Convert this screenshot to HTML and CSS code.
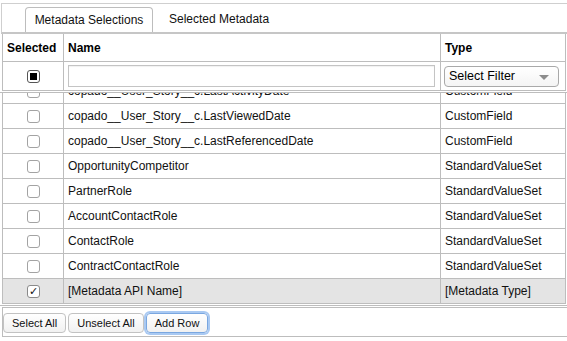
FILE: index.html
```html
<!DOCTYPE html>
<html lang="en">
<head>
    <meta charset="UTF-8">
    <title>Metadata Selections</title>
    <link rel="stylesheet" href="styles.css">
</head>
<body>
    <div class="panel">
        <div class="tabs">
            <div class="tab active">Metadata Selections</div>
            <div class="tab">Selected Metadata</div>
        </div>

        <table class="grid">
            <colgroup>
                <col class="col-sel">
                <col class="col-name">
                <col class="col-type">
            </colgroup>
            <tr class="titles">
                <th>Selected</th>
                <th>Name</th>
                <th>Type</th>
            </tr>
            <tr class="filters">
                <td class="sel"><span class="cb cb-mixed"></span></td>
                <td><input class="name-filter" type="text"></td>
                <td>
                    <div class="select">Select Filter<span class="caret"></span></div>
                </td>
            </tr>
        </table>

        <!-- scrolled list, first row half hidden -->
        <div class="rows-view">
            <table class="grid rows">
                <colgroup>
                    <col class="col-sel">
                    <col class="col-name">
                    <col class="col-type">
                </colgroup>
                <tr><td class="sel"><span class="cb"></span></td><td>copado__User_Story__c.LastActivityDate</td><td>CustomField</td></tr>
                <tr><td class="sel"><span class="cb"></span></td><td>copado__User_Story__c.LastViewedDate</td><td>CustomField</td></tr>
                <tr><td class="sel"><span class="cb"></span></td><td>copado__User_Story__c.LastReferencedDate</td><td>CustomField</td></tr>
                <tr><td class="sel"><span class="cb"></span></td><td>OpportunityCompetitor</td><td>StandardValueSet</td></tr>
                <tr><td class="sel"><span class="cb"></span></td><td>PartnerRole</td><td>StandardValueSet</td></tr>
                <tr><td class="sel"><span class="cb"></span></td><td>AccountContactRole</td><td>StandardValueSet</td></tr>
                <tr><td class="sel"><span class="cb"></span></td><td>ContactRole</td><td>StandardValueSet</td></tr>
                <tr><td class="sel"><span class="cb"></span></td><td>ContractContactRole</td><td>StandardValueSet</td></tr>
                <tr class="new-row"><td class="sel"><span class="cb cb-checked">&#10003;</span></td><td>[Metadata API Name]</td><td>[Metadata Type]</td></tr>
            </table>
        </div>

        <div class="footer">
            <button class="btn">Select All</button>
            <button class="btn">Unselect All</button>
            <button class="btn focused">Add Row</button>
        </div>
    </div>
</body>
</html>
```

FILE: styles.css
```css
body {
    margin: 0;
    background: #fff;
    font-family: 'Liberation Sans', Arial, sans-serif;
    font-size: 12px;
    color: #000;
}

.panel {
    padding-top: 3px;
    width: 567px;
}

/* Tabs */
.tabs {
    display: flex;
    align-items: flex-end;
    height: 28px;
    margin-left: 1px;
    padding-left: 23px;
    border-top: 1px solid #cfcfcf;
    border-left: 1px solid #cfcfcf;
    border-bottom: 2px solid #c6c6c6;
}

.tab {
    height: 25px;
    line-height: 24px;
    padding: 0 16px;
    color: #111;
}

.tab.active {
    box-sizing: border-box;
    width: 128px;
    padding: 0;
    text-align: center;
    border: 1px solid #bdbdbd;
    border-bottom: none;
    border-radius: 4px 4px 0 0;
}

/* Grid */
.grid {
    border-collapse: collapse;
    table-layout: fixed;
    width: 563px;
    margin-left: 2px;
}

.col-sel { width: 61px; }
.col-name { width: 377px; }
.col-type { width: 125px; }

.grid th,
.grid td {
    border: 1px solid #bdbdbd;
    padding: 0 4px;
    text-align: left;
    white-space: nowrap;
    overflow: hidden;
}

.grid tr:first-child th,
.grid tr:first-child td {
    border-top: none;
}

.titles th {
    height: 26px;
    font-weight: bold;
    padding-top: 1px;
}

.filters td {
    height: 28px;
}

.grid .sel {
    text-align: center;
    padding: 0;
}

/* Checkboxes */
.cb {
    display: inline-block;
    box-sizing: border-box;
    width: 13px;
    height: 13px;
    vertical-align: middle;
    border: 1px solid #a3a3a3;
    border-radius: 3px;
    background: #fff;
    font-size: 11px;
    line-height: 11px;
    text-align: center;
    color: #111;
}

.cb-mixed {
    border-color: #555;
    position: relative;
}

.cb-mixed::after {
    content: "";
    position: absolute;
    left: 2px;
    top: 2px;
    width: 7px;
    height: 7px;
    background: #000;
}

.cb-checked {
    border-color: #8a8a8a;
}

/* Filters */
.name-filter {
    box-sizing: border-box;
    width: 367px;
    height: 22px;
    margin: 0;
    display: block;
    border: 1px solid #c4c4c4;
    box-shadow: inset 0 1px 1px rgba(0, 0, 0, 0.06);
}

.select {
    box-sizing: border-box;
    width: 115px;
    height: 21px;
    margin-left: -1px;
    padding-left: 4px;
    line-height: 19px;
    font-size: 12.5px;
    border: 1px solid #a9a9a9;
    border-radius: 4px;
    background: linear-gradient(#fff, #f4f4f4);
    position: relative;
}

.caret {
    position: absolute;
    right: 9px;
    top: 8px;
    border-left: 5px solid transparent;
    border-right: 5px solid transparent;
    border-top: 5px solid #8c8c8c;
}

/* Rows */
.rows-view {
    height: 212px;
    overflow: hidden;
    margin-top: 1px;
    border-top: 1px solid #bdbdbd;
    border-bottom: 1px solid #bdbdbd;
}

.rows {
    margin-top: -15px;
}

.rows td {
    height: 24px;
    color: #111;
}

.rows tr:first-child td {
    border-top: 1px solid #bdbdbd;
}

.new-row td {
    background: #e4e4e4;
}

/* Footer */
.footer {
    display: flex;
    gap: 2px;
    margin-top: 1px;
    margin-left: 2px;
    padding: 5px 0 3px 0;
    border-top: 1px solid #bdbdbd;
    border-bottom: 1px solid #bdbdbd;
    border-left: 1px solid #bdbdbd;
}

.btn {
    height: 20px;
    padding: 0 8px;
    font-family: 'Liberation Sans', Arial, sans-serif;
    font-size: 11px;
    color: #111;
    background: linear-gradient(#fff, #f1f1f1);
    border: 1px solid #c2c2c2;
    border-radius: 4px;
}

.btn.focused {
    border-color: #7aa7e0;
    box-shadow: 0 0 0 2px #a9c9f2;
}
```
